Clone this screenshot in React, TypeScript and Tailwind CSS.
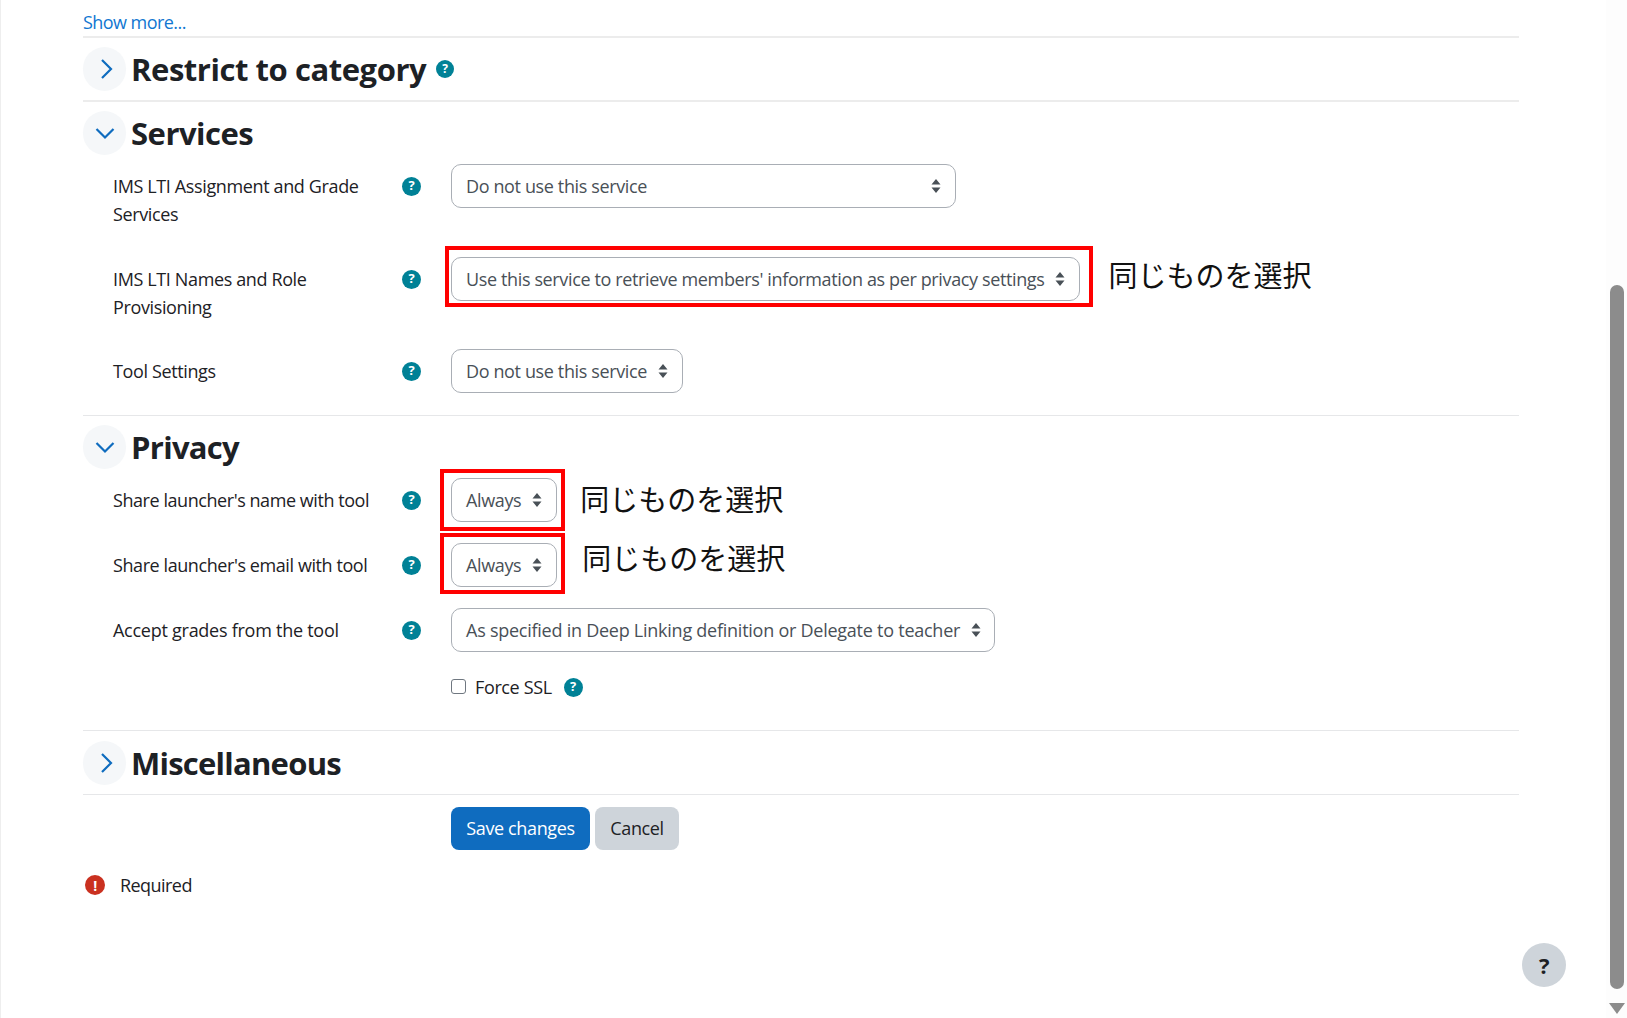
import React from "react";

const Help = ({ small = false }: { small?: boolean }) => (
  <span
    className={`flex shrink-0 items-center justify-center rounded-full bg-[#008196] font-bold tracking-normal text-white ${
      small ? "h-[18px] w-[18px] text-[12px]" : "h-[19px] w-[19px] text-[13px]"
    }`}
  >
    ?
  </span>
);

const Arrows = () => (
  <svg width="10" height="16" viewBox="0 0 10 16" className="shrink-0">
    <path d="M5 1 L9.5 6.5 H0.5 Z M5 15 L0.5 9.5 H9.5 Z" fill="#495057" />
  </svg>
);

const Select = ({ text, w, red, textClass }: { text: string; w?: string; red?: string; textClass?: string }) => (
  <div
    className={`relative flex h-[44px] shrink-0 items-center justify-between gap-[11px] rounded-[10px] border border-[#a9aeb5] bg-white pl-[14px] pr-[14px] text-[#495057] ${w ?? ""}`}
  >
    <span className={`whitespace-nowrap ${textClass ?? ""}`}>{text}</span>
    <Arrows />
    {red && <span className={`pointer-events-none absolute border-[4px] border-[#ff0000] ${red}`} />}
  </div>
);

const Note = ({ className }: { className: string }) => (
  <span
    className={`whitespace-nowrap text-[29px] leading-[40px] tracking-normal text-[#111] [font-family:'Noto_Sans_CJK_JP',sans-serif] ${className}`}
  >
    同じものを選択
  </span>
);

const Row = ({
  label,
  className,
  labelClass,
  children,
}: {
  label: string;
  className: string;
  labelClass?: string;
  children: React.ReactNode;
}) => (
  <div className={`flex items-start ${className}`}>
    <div className={`w-[318px] shrink-0 pl-[30px] pr-[16px] pt-[8px] leading-[28px] text-[#1d2125] ${labelClass ?? ""}`}>
      {label}
    </div>
    <div className="flex h-[44px] w-[50px] shrink-0 items-center pl-[1px]">
      <Help />
    </div>
    {children}
  </div>
);

const Chevron = ({ open }: { open: boolean }) => (
  <span className="flex h-[44px] w-[43px] shrink-0 items-center justify-center rounded-full bg-[#f5f7f9]">
    <svg width="20" height="20" viewBox="0 0 20 20" fill="none" stroke="#0f6cbf" strokeWidth="2.2">
      {open ? <path d="M1.5 6 L10 14.5 L18.5 6" /> : <path d="M7 1 L16 10 L7 19" />}
    </svg>
  </span>
);

const Heading = ({ title, open, help, titleClass }: { title: string; open: boolean; help?: boolean; titleClass?: string }) => (
  <div className="flex h-[44px] items-center">
    <Chevron open={open} />
    <h3
      className={`ml-[5px] whitespace-nowrap text-[31px] font-bold leading-[44px] text-[#1d2125] ${titleClass ?? "tracking-[-0.5px]"}`}
    >
      {title}
    </h3>
    {help && (
      <span className="ml-[10px]">
        <Help small />
      </span>
    )}
  </div>
);

const Line = () => <div className="h-[1px] bg-[#e6e7e9]" />;

export default function App() {
  return (
    <div className="relative flex h-[1018px] w-full overflow-hidden border-l border-[#eeeeee] bg-white text-[18px] tracking-[-0.37px] [font-family:'Open_Sans',sans-serif]">
      <main className="w-[1605px] shrink-0 pl-[82px] pr-[87px]">
        <div className="pt-[8px] leading-[28px] tracking-[-0.55px] text-[#1177d1]">Show more...</div>
        <div className="h-[2px] bg-[#ececec]" />
        <section className="pb-[9px] pt-[9px]">
          <Heading title="Restrict to category" open={false} help titleClass="tracking-[-0.45px]" />
        </section>
        <div className="h-[2px] bg-[#ececec]" />

        <section className="pt-[9px]">
          <Heading title="Services" open />
          <Row label="IMS LTI Assignment and Grade Services" className="mt-[9px] h-[93px]">
            <Select text="Do not use this service" w="w-[505px]" />
          </Row>
          <Row label="IMS LTI Names and Role Provisioning" className="h-[92px]">
            <Select
              text="Use this service to retrieve members' information as per privacy settings"
              red="-bottom-[7px] -left-[7px] -right-[14px] -top-[12px]"
            />
            <Note className="ml-[28px] -mt-[3px]" />
          </Row>
          <Row label="Tool Settings" className="h-[66px]">
            <Select text="Do not use this service" />
          </Row>
        </section>
        <Line />

        <section className="pt-[9px]">
          <Heading title="Privacy" open titleClass="tracking-[-0.7px]" />
          <Row label="Share launcher's name with tool" className="mt-[9px] h-[65px]" labelClass="tracking-[-0.44px]">
            <Select text="Always" red="-bottom-[10px] -left-[12px] -right-[9px] -top-[10px]" />
            <Note className="ml-[23px] mt-[0px]" />
          </Row>
          <Row label="Share launcher's email with tool" className="h-[65px]" labelClass="tracking-[-0.42px]">
            <Select text="Always" red="-bottom-[8px] -left-[12px] -right-[9px] -top-[11px]" />
            <Note className="ml-[25px] -mt-[6px]" />
          </Row>
          <Row label="Accept grades from the tool" className="h-[57px]" labelClass="tracking-[-0.26px]">
            <Select
              text="As specified in Deep Linking definition or Delegate to teacher"
              w="w-[544px]"
              textClass="tracking-[-0.25px]"
            />
          </Row>
          <div className="flex h-[44px] items-center pl-[368px]">
            <span className="mb-[2px] h-[15px] w-[15px] rounded-[3px] border border-[#6f7780] bg-white" />
            <span className="ml-[9px] text-[#1d2125]">Force SSL</span>
            <span className="ml-[12px]">
              <Help />
            </span>
          </div>
        </section>
        <div className="mt-[21px]">
          <Line />
        </div>

        <section className="pb-[9px] pt-[10px]">
          <Heading title="Miscellaneous" open={false} titleClass="tracking-[-0.75px]" />
        </section>
        <Line />

        <div className="mt-[12px] flex gap-[5px] pl-[368px]">
          <button className="h-[43px] w-[139px] rounded-[8px] bg-[#0f6cbf] text-white">Save changes</button>
          <button className="h-[43px] w-[84px] rounded-[8px] bg-[#ced4da] text-[#1d2125]">Cancel</button>
        </div>

        <div className="mt-[21px] flex h-[28px] items-center pl-[2px]">
          <span className="flex h-[20px] w-[20px] items-center justify-center rounded-full bg-[#ca3120] text-[14px] font-bold text-white">
            !
          </span>
          <span className="ml-[15px] tracking-[-0.55px] text-[#1d2125]">Required</span>
        </div>
      </main>

      <aside className="flex w-[21px] shrink-0 flex-col items-center bg-[#fdfdfd] pl-[1px] pt-[285px]">
        <div className="h-[704px] w-[14px] rounded-full bg-[#8c8c8c]" />
        <svg width="16" height="11" viewBox="0 0 16 11" className="mt-[14px]">
          <path d="M0 0 H16 L8 11 Z" fill="#8c8c8c" />
        </svg>
      </aside>

      <button className="absolute left-[1521px] top-[943px] flex h-[44px] w-[44px] items-center justify-center rounded-full bg-[#ced4da] text-[22px] font-bold text-[#1d2125]">
        ?
      </button>
    </div>
  );
}
